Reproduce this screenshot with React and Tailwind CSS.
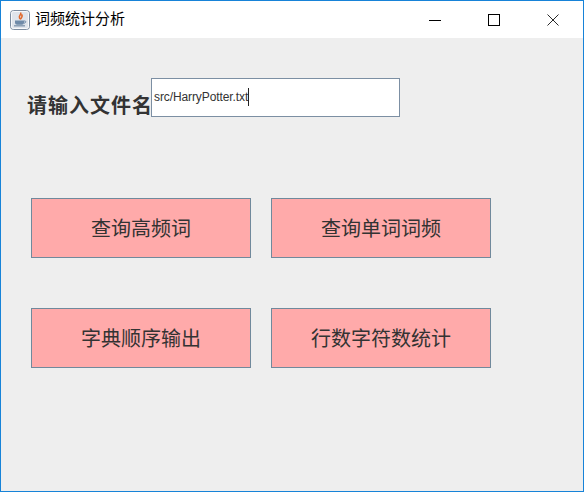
import React from "react";

const cjk = "font-['Liberation_Sans','Noto_Sans_CJK_SC',sans-serif]";

function JavaIcon() {
  return (
    <svg width="20" height="20" viewBox="0 0 20 20" className="shrink-0">
      <rect x="0.5" y="0.5" width="19" height="19" rx="3" fill="#dfe4eb" stroke="#7d8da0" />
      <rect x="1.5" y="1.5" width="17" height="17" rx="2" fill="none" stroke="#f8f9fb" />
      <path d="M10.5 2.5c1.6 2-2.2 3-1 5.4.3.6.9 1 1.2 1.5-.2-1.4 3-2.8.7-5" fill="none" stroke="#e0682c" strokeWidth="1.5" />
      <path d="M5 10.5h9v2.2c0 1.2-1 2-2 2H7c-1 0-2-.8-2-2z" fill="#6f8aa8" />
      <path d="M14 11h1c1.2 0 1.2 2-1 2.2" fill="none" stroke="#6f8aa8" />
      <path d="M4 15.8h11" stroke="#8499b0" strokeWidth="1.4" />
    </svg>
  );
}

function WindowControls() {
  return (
    <div className="flex h-full pr-[1px]">
      <div className="flex w-[59px] items-center justify-center">
        <svg width="12" height="12" viewBox="0 0 12 12">
          <path d="M0 6.5h12" stroke="#000" />
        </svg>
      </div>
      <div className="flex w-[59px] items-center justify-center">
        <svg width="12" height="12" viewBox="0 0 12 12">
          <rect x="0.5" y="0.5" width="11" height="11" fill="none" stroke="#000" />
        </svg>
      </div>
      <div className="flex w-[59px] items-center justify-center">
        <svg width="12" height="12" viewBox="0 0 12 12">
          <path d="M0.5 0.5l11 11M11.5 0.5l-11 11" stroke="#111" strokeWidth="0.9" />
        </svg>
      </div>
    </div>
  );
}

function PinkButton({ children }) {
  return (
    <button className={`h-[60px] w-[220px] border border-[#70899c] bg-[#ffaaaa] pt-[1px] text-[20px] text-[#333333] ${cjk}`}>
      {children}
    </button>
  );
}

export default function App() {
  return (
    <div className={`flex h-[492px] w-[584px] flex-col border border-[#1783d8] bg-[#eeeeee] ${cjk}`}>
      {/* title bar */}
      <div className="flex h-[37px] shrink-0 items-center justify-between bg-white pl-[9px]">
        <div className="flex items-center gap-[5px]">
          <JavaIcon />
          <span className="text-[15px] text-black">词频统计分析</span>
        </div>
        <WindowControls />
      </div>

      {/* file name row */}
      <div className="flex items-start pl-[26px] pt-[40px]">
        <span className="mt-[15px] w-[124px] whitespace-nowrap text-[20px] leading-[27px] font-bold tracking-[1px] text-[#333333]">
          请输入文件名
        </span>
        <div className="flex h-[39px] w-[249px] items-center border border-[#7c8fa3] bg-white pb-[1px] pl-[2px]">
          <span className="text-[12px] tracking-[-0.1px] text-[#333333]">src/HarryPotter.txt</span>
          <span className="h-[18px] w-px bg-[#222222]" />
        </div>
      </div>

      {/* action buttons */}
      <div className="grid grid-cols-[220px_220px] gap-x-[20px] gap-y-[50px] pl-[30px] pt-[78px]">
        <PinkButton>查询高频词</PinkButton>
        <PinkButton>查询单词词频</PinkButton>
        <PinkButton>字典顺序输出</PinkButton>
        <PinkButton>行数字符数统计</PinkButton>
      </div>
    </div>
  );
}
